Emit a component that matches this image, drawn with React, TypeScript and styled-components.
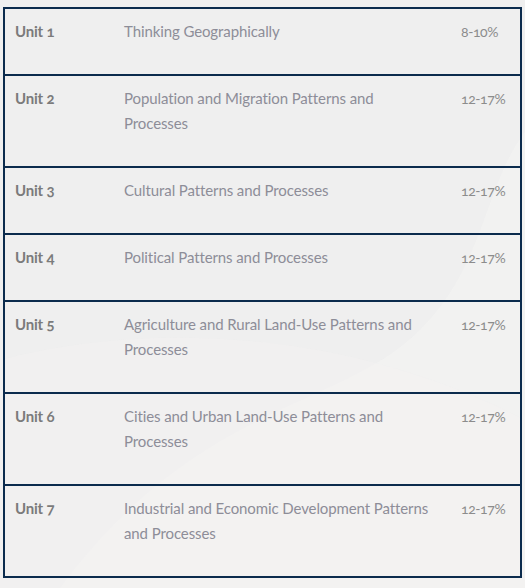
import React from "react";
import styled, { createGlobalStyle } from "styled-components";

const GlobalStyle = createGlobalStyle`
  html, body {
    margin: 0;
    padding: 0;
    background: #efefef;
  }
  body {
    font-family: Lato, "Open Sans", sans-serif;
  }
`;

const Page = styled.div`
  position: relative;
  width: 525px;
  height: 588px;
  overflow: hidden;
  background: #efefef;
  padding: 7px 3px 0 3px;
  box-sizing: border-box;
`;

const Backdrop = styled.svg`
  position: absolute;
  inset: 0;
  width: 525px;
  height: 588px;
  pointer-events: none;
`;

const Table = styled.div`
  position: relative;
  border: 2px solid #0b2b4d;
  display: flex;
  flex-direction: column;
`;

const Row = styled.div<{ $first?: boolean }>`
  display: grid;
  grid-template-columns: 109px 337px 1fr;
  border-top: ${(p) => (p.$first ? "none" : "2px solid #0b2b4d")};
`;

const Cell = styled.div`
  padding: 10px 10px 30px 10px;
  font-size: 15px;
  line-height: 25px;
  letter-spacing: 0;
`;

const UnitCell = styled(Cell)`
  font-weight: 700;
  color: #7b7b7b;
  font-variant-numeric: oldstyle-nums;
  white-space: nowrap;
  letter-spacing: -0.2px;
`;

const TitleCell = styled(Cell)`
  color: #8d8d98;
  letter-spacing: -0.1px;
`;

const WeightCell = styled(Cell)`
  color: #8c8c8c;
  font-size: 14px;
  letter-spacing: -0.4px;
  font-variant-numeric: oldstyle-nums;
  white-space: nowrap;
`;

const units = [
  { unit: "Unit 1", title: "Thinking Geographically", weight: "8-10%" },
  { unit: "Unit 2", title: "Population and Migration Patterns and Processes", weight: "12-17%" },
  { unit: "Unit 3", title: "Cultural Patterns and Processes", weight: "12-17%" },
  { unit: "Unit 4", title: "Political Patterns and Processes", weight: "12-17%" },
  { unit: "Unit 5", title: "Agriculture and Rural Land-Use Patterns and Processes", weight: "12-17%" },
  { unit: "Unit 6", title: "Cities and Urban Land-Use Patterns and Processes", weight: "12-17%" },
  { unit: "Unit 7", title: "Industrial and Economic Development Patterns and Processes", weight: "12-17%" },
];

export default function App() {
  return (
    <>
      <GlobalStyle />
      <Page>
        <Backdrop viewBox="0 0 525 588">
          <path d="M560 100 C 480 150, 500 250, 420 330 C 340 410, 200 400, 60 588 L 560 588 Z" fill="#f4f3f2" opacity="0.7" />
          <path d="M 0 360 C 150 320, 350 330, 525 420 L 525 588 L 0 588 Z" fill="#f3f2f1" opacity="0.5" />
        </Backdrop>
        <Table>
          {units.map((u, i) => (
            <Row key={u.unit} $first={i === 0}>
              <UnitCell>{u.unit}</UnitCell>
              <TitleCell>{u.title}</TitleCell>
              <WeightCell>{u.weight}</WeightCell>
            </Row>
          ))}
        </Table>
      </Page>
    </>
  );
}
